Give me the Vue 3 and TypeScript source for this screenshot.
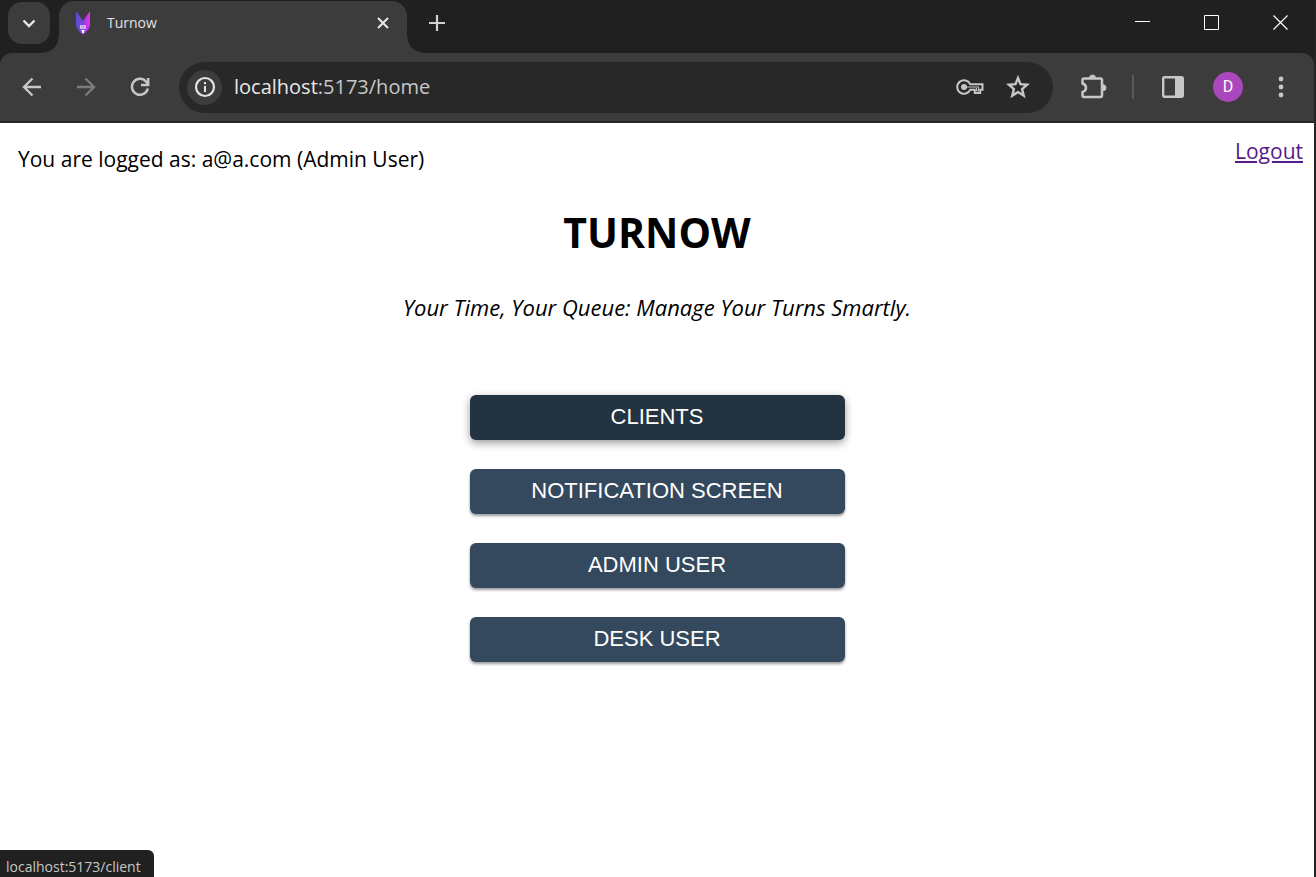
<script setup lang="ts">
interface MenuEntry {
  label: string
  active?: boolean
}

const entries: MenuEntry[] = [
  { label: 'CLIENTS', active: true },
  { label: 'NOTIFICATION SCREEN' },
  { label: 'ADMIN USER' },
  { label: 'DESK USER' },
]
</script>

<template>
  <div class="window">
    <header class="tab-strip">
      <button class="tab-search" aria-label="Search tabs">
        <svg width="16" height="16" viewBox="0 0 16 16"><path d="M2.500 5.500 8 11 13.500 5.500" fill="none" stroke="#e8e8e8" stroke-width="2.400" /></svg>
      </button>
      <div class="tab">
        <svg class="favicon" width="16" height="26" viewBox="0 0 16 26">
          <defs>
            <linearGradient id="fox" x1="0" y1="0" x2="1" y2="0">
              <stop offset="0" stop-color="#5b4fd0" />
              <stop offset="0.45" stop-color="#7a43dc" />
              <stop offset="1" stop-color="#f02cf0" />
            </linearGradient>
          </defs>
          <path d="M1 1 8 11 15 1V15Q14 20 8 25 2 20 1 15Z" fill="url(#fox)" />
          <path d="M5 15h6v4H5z" fill="#cdb8f5" />
          <path d="M5.500 20h5l-1.500 1v2H7v-2z" fill="#fff" />
          <path d="M7 16v2M9 16v2" stroke="#9a80e5" stroke-width="0.6" />
        </svg>
        <span class="tab-title">Turnow</span>
        <button class="icon-button" aria-label="Close tab">
          <svg width="14" height="14" viewBox="0 0 14 14"><path d="M2 2 12 12M12 2 2 12" stroke="#e8e8e8" stroke-width="2" /></svg>
        </button>
      </div>
      <button class="icon-button new-tab" aria-label="New tab">
        <svg width="18" height="18" viewBox="0 0 18 18"><path d="M9 1v16M1 9h16" stroke="#d0d0d0" stroke-width="2.200" /></svg>
      </button>
      <div class="window-controls">
        <button class="icon-button" aria-label="Minimize">
          <svg width="15" height="15" viewBox="0 0 15 15"><path d="M0 6.500h15" stroke="#fff" /></svg>
        </button>
        <button class="icon-button" aria-label="Maximize">
          <svg width="15" height="15" viewBox="0 0 15 15"><path d="M.5.5h14v14H.5z" fill="none" stroke="#fff" /></svg>
        </button>
        <button class="icon-button" aria-label="Close window">
          <svg width="15" height="15" viewBox="0 0 15 15"><path d="M.5.500 14.500 14.500M14.500.5.5 14.500" stroke="#fff" stroke-width="1.200" /></svg>
        </button>
      </div>
    </header>

    <nav class="toolbar">
      <div class="nav-buttons">
        <button class="icon-button" aria-label="Back">
          <svg width="20" height="20" viewBox="0 0 20 20"><path d="M19 10H2.500M10.500 1.500 2 10l8.500 8.500" fill="none" stroke="#c7c7c7" stroke-width="2.400" /></svg>
        </button>
        <button class="icon-button" aria-label="Forward" disabled>
          <svg width="20" height="20" viewBox="0 0 20 20"><path d="M1 10h16.500M9.500 1.500 18 10l-8.500 8.500" fill="none" stroke="#7b7b7b" stroke-width="2.400" /></svg>
        </button>
        <button class="icon-button" aria-label="Reload">
          <svg width="20" height="20" viewBox="0 0 20 20"><path d="M17.800 11.500A8 8 0 1 1 16 4.500L18 7M18.200 1v7H11" fill="none" stroke="#c7c7c7" stroke-width="2.500" /></svg>
        </button>
      </div>

      <div class="omnibox">
        <button class="site-info" aria-label="View site information">
          <svg width="22" height="22" viewBox="0 0 22 22"><circle cx="11" cy="11" r="9" fill="none" stroke="#e3e3e3" stroke-width="2.200" /><path d="M11 10v6M11 6v2.200" stroke="#e3e3e3" stroke-width="2" /></svg>
        </button>
        <div class="address"><span class="host">localhost</span>:5173/home</div>
        <button class="icon-button" aria-label="Manage passwords">
          <svg width="28" height="18" viewBox="0 0 28 18">
            <path d="M14.300 6.300A6.800 6.800 0 1 0 14.300 11.700H18.800V15H24.200V11.700H26.500V6.300Z" fill="none" stroke="#c7c7c7" stroke-width="2" />
            <circle cx="8" cy="9" r="3" fill="#c7c7c7" />
            <path d="M10 9h12.500v4h-2V10" fill="none" stroke="#c7c7c7" stroke-width="1" />
          </svg>
        </button>
        <button class="icon-button" aria-label="Bookmark this tab">
          <svg width="24" height="24" viewBox="0 0 24 24"><path d="M12 3l2.500 6.200 6.700.5-5.100 4.400 1.600 6.500L12 17.100l-5.700 3.500 1.600-6.500L2.800 9.700l6.700-.5Z" fill="none" stroke="#c7c7c7" stroke-width="2.400" /></svg>
        </button>
      </div>

      <button class="icon-button extensions" aria-label="Extensions">
        <svg width="28" height="28" viewBox="0 0 28 28">
          <path d="M5 5.500H21.500Q23 5.500 23 7V22.500Q23 24 21.500 24H5Q3.500 24 3.500 22.500V19Q7 18 7 14.800T3.500 10.500V7Q3.500 5.500 5 5.500Z" fill="none" stroke="#c7c7c7" stroke-width="2.500" stroke-linejoin="round" />
          <path d="M10.500 5a3 3 0 0 1 6 0ZM24 11.800a3 3 0 0 1 0 6Z" fill="#c7c7c7" stroke="#c7c7c7" />
        </svg>
      </button>
      <span class="divider"></span>
      <button class="icon-button" aria-label="Side panel">
        <svg width="22" height="22" viewBox="0 0 22 22"><rect x="1.200" y="1.200" width="19.600" height="19.600" rx="1.500" fill="none" stroke="#c7c7c7" stroke-width="2.400" /><path d="M13 1h8v20h-8z" fill="#c7c7c7" /></svg>
      </button>
      <button class="avatar" aria-label="Profile">D</button>
      <button class="icon-button" aria-label="Browser menu">
        <svg width="6" height="22" viewBox="0 0 6 22" fill="#c7c7c7"><circle cx="3" cy="3" r="2.400" /><circle cx="3" cy="11" r="2.400" /><circle cx="3" cy="19" r="2.400" /></svg>
      </button>
    </nav>

    <main class="page">
      <div class="session">
        <p class="user">You are logged as: a@a.com (Admin User)</p>
        <a class="logout" href="#logout">Logout</a>
      </div>
      <h1 class="title">TURNOW</h1>
      <p class="tagline">Your Time, Your Queue: Manage Your Turns Smartly.</p>
      <div class="menu">
        <button v-for="entry in entries" :key="entry.label" class="menu-button" :class="{ active: entry.active }">
          {{ entry.label }}
        </button>
      </div>
    </main>
    <div class="status">localhost:5173/client</div>
  </div>
</template>

<style>
body {
  margin: 0;
}
</style>

<style scoped>
.window {
  position: relative;
  display: flex;
  flex-direction: column;
  box-sizing: border-box;
  min-height: 100vh;
  border-right: 2px solid #242424;
  background: #202020;
  font-family: "Open Sans", "Noto Sans", sans-serif;
}

button {
  margin: 0;
  padding: 0;
  border: 0;
  font: inherit;
}

svg {
  display: block;
}

.icon-button {
  display: flex;
  flex: none;
  background: none;
}

.tab-strip {
  display: flex;
  align-items: flex-start;
  height: 53px;
  padding-left: 8px;
}

.tab-search {
  display: flex;
  align-items: center;
  justify-content: center;
  width: 42px;
  height: 42px;
  margin-top: 2px;
  border-radius: 14px;
  background: #3c3c3c;
}

.tab {
  position: relative;
  display: flex;
  align-items: center;
  box-sizing: border-box;
  width: 348px;
  height: 52px;
  margin: 1px 0 0 9px;
  padding: 0 17px 8px 16px;
  border-radius: 15px 15px 0 0;
  background: #3c3c3c;
}

.tab::before,
.tab::after {
  content: "";
  position: absolute;
  bottom: 0;
  width: 16px;
  height: 16px;
}

.tab::before {
  right: 100%;
  background: radial-gradient(circle at 0 0, transparent 15px, #3c3c3c 16px);
}

.tab::after {
  left: 100%;
  background: radial-gradient(circle at 100% 0, transparent 15px, #3c3c3c 16px);
}

.tab-title {
  flex: 1;
  margin-left: 16px;
  color: #e3e3e3;
  font-size: 14px;
  line-height: 20px;
}

.new-tab {
  margin: 14px 0 0 21px;
}

.window-controls {
  display: flex;
  gap: 54px;
  margin: 15px 26px 0 auto;
}

.toolbar {
  display: flex;
  align-items: center;
  box-sizing: border-box;
  height: 70px;
  padding: 0 30px 0 22px;
  border-bottom: 2px solid #2a2a2a;
  border-radius: 12px 12px 0 0;
  background: #3c3c3c;
}

.nav-buttons {
  display: flex;
  gap: 34px;
}

.omnibox {
  display: flex;
  flex: 1;
  align-items: center;
  box-sizing: border-box;
  height: 51px;
  margin-left: 29px;
  padding: 0 23px 0 8px;
  border-radius: 26px;
  background: #282828;
}

.omnibox > .icon-button + .icon-button {
  margin-left: 22px;
}

.site-info {
  display: flex;
  align-items: center;
  justify-content: center;
  width: 35px;
  height: 35px;
  border-radius: 50%;
  background: #3c3c3c;
}

.address {
  flex: 1;
  margin-left: 12px;
  color: #c7c7c7;
  font-size: 20px;
  line-height: 28px;
}

.host {
  color: #e8e8e8;
}

.extensions {
  margin-left: 26px;
}

.divider {
  width: 2px;
  height: 24px;
  margin: 0 28px 0 25px;
  background: #5a5a5a;
}

.avatar {
  width: 30px;
  height: 30px;
  margin: 0 35px 0 29px;
  border-radius: 50%;
  background: #ab47bc;
  color: #fff;
  font-family: Roboto, sans-serif;
  font-size: 16px;
  line-height: 30px;
}

.page {
  display: flex;
  flex: 1;
  flex-direction: column;
  align-items: center;
  background: #fff;
  color: #000;
}

.session {
  display: flex;
  align-self: stretch;
  justify-content: space-between;
  padding: 14px 11px 0 18px;
  font-size: 21px;
  line-height: 28px;
}

.user {
  margin: 8px 0 0;
}

.logout {
  color: #551a8b;
}

.title {
  margin: 32px 0 0;
  font-size: 41px;
  font-weight: 700;
  line-height: 54px;
}

.tagline {
  margin: 34px 0 0;
  font-size: 22px;
  font-style: italic;
  line-height: 28px;
}

.menu {
  display: flex;
  flex-direction: column;
  gap: 29px;
  width: 375px;
  margin-top: 74px;
}

.menu-button {
  height: 45px;
  padding-bottom: 2px;
  border-radius: 6px;
  background: #34495e;
  box-shadow: 0 2px 3px rgba(0, 0, 0, 0.4);
  color: #fff;
  font-family: "Liberation Sans", Arial, sans-serif;
  font-size: 22px;
}

.menu-button.active {
  background: #243342;
  box-shadow: 0 3px 8px rgba(0, 0, 0, 0.4);
}

.status {
  position: absolute;
  bottom: 0;
  left: 0;
  box-sizing: border-box;
  height: 27px;
  padding: 7px 13px 0 6px;
  border-top-right-radius: 6px;
  background: #202020;
  color: #c7c7c7;
  font-size: 14px;
  line-height: 20px;
}
</style>
